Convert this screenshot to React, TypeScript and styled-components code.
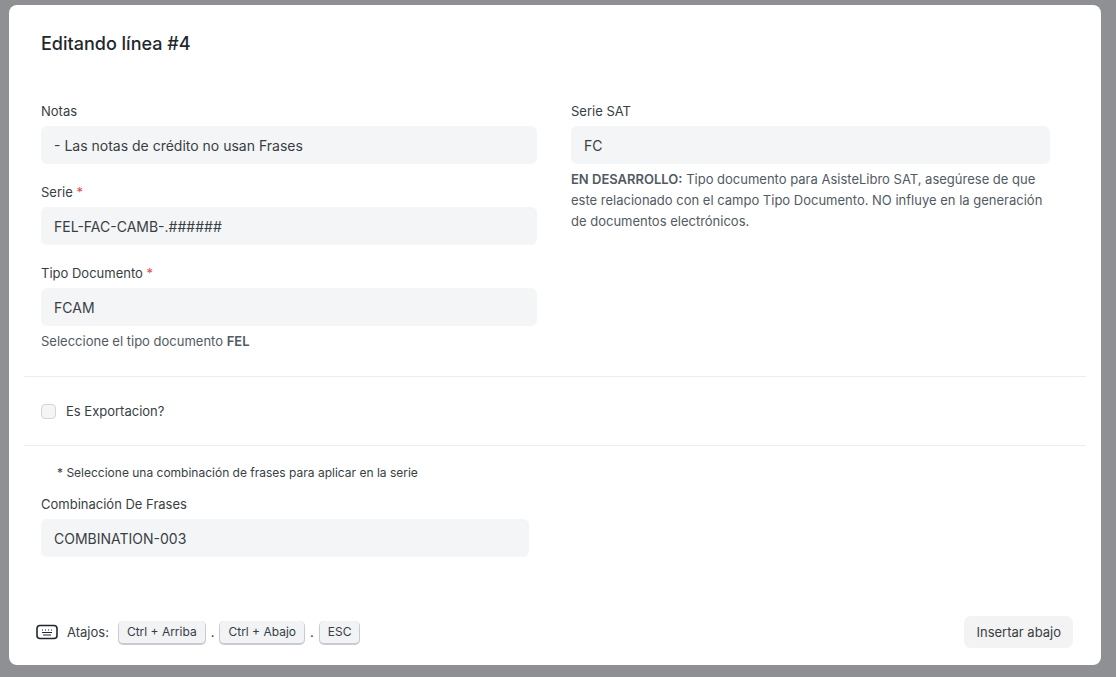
import React from 'react';
import styled, { createGlobalStyle } from 'styled-components';

const Global = createGlobalStyle`
  html, body { margin: 0; height: 100%; background: #8e9094; }
  body { font-family: Inter, "Noto Sans", sans-serif; color: #1f272e; }
`;

const Backdrop = styled.div`
  height: 677px;
  padding: 5px 15px 12px 9px;
  box-sizing: border-box;
`;

const Modal = styled.div`
  width: 1092px;
  height: 660px;
  background: #fff;
  border-radius: 8px;
  display: flex;
  flex-direction: column;
  box-sizing: border-box;
`;

const Title = styled.h3`
  margin: 0;
  padding: 28px 32px 0;
  font-size: 18px;
  font-weight: 500;
  line-height: 22px;
`;

const Section = styled.div<{ $border?: boolean; $pad?: string }>`
  margin: 0 15px;
  padding: ${p => p.$pad || '0'};
  border-bottom: ${p => (p.$border ? '1px solid #ebeef0' : 'none')};
  display: grid;
  grid-template-columns: 530px 530px;
`;

const Col = styled.div<{ $right?: number }>`
  padding: 0 ${p => p.$right ?? 17}px 0 17px;
  display: flex;
  flex-direction: column;
`;

const Label = styled.div`
  font-size: 13px;
  color: #383e44;
  line-height: 16px;
  margin-bottom: 7px;
`;

const Req = styled.span`
  color: #e24c4c;
`;

const Field = styled.div`
  height: 38px;
  background: #f4f5f6;
  border-radius: 6px;
  padding: 0 13px;
  display: flex;
  align-items: center;
  font-size: 14px;
  color: #383e44;
  margin-bottom: 20px;
`;

const Help = styled.div`
  font-size: 13px;
  color: #525a63;
  line-height: 21px;
  margin-top: -15px;
  b { font-weight: 600; }
`;

const CheckRow = styled.label`
  display: flex;
  align-items: center;
  gap: 10px;
  font-size: 13px;
  color: #383e44;
`;

const Box = styled.span`
  width: 13px;
  height: 13px;
  border: 1px solid #d1d5d9;
  border-radius: 4px;
  background: #f4f5f6;
`;

const Note = styled.div`
  font-size: 12px;
  color: #383e44;
  margin: 0 0 16px 16px;
`;

const Footer = styled.div`
  margin-top: auto;
  padding: 0 28px 17px 27px;
  display: flex;
  align-items: center;
  justify-content: space-between;
`;

const Shortcuts = styled.div`
  display: flex;
  align-items: center;
  gap: 6px;
  font-size: 13px;
  color: #383e44;
`;

const Kbd = styled.span`
  font-size: 12px;
  background: #f1f3f5;
  border-radius: 4px;
  box-shadow: 0 1px 0 1px #c8ccd0;
  padding: 3px 8px 4px;
  color: #383e44;
`;

const Btn = styled.button`
  height: 32px;
  padding: 0 11px;
  border: none;
  border-radius: 7px;
  background: #f3f3f3;
  font-family: inherit;
  font-size: 13px;
  color: #383e44;
`;

const KeyIcon = () => (
  <svg width="22" height="16" viewBox="0 0 22 16" fill="none" stroke="#1f272e">
    <rect x="1" y="1.5" width="20" height="13" rx="3" strokeWidth="1.6" />
    <path d="M6 6h1M9 6h1M12 6h1M15 6h1M6 8.5h10M7 11h8" strokeWidth="1" />
  </svg>
);

export default function App() {
  return (
    <>
      <Global />
      <Backdrop>
        <Modal>
          <Title>Editando línea #4</Title>
          <Section $border $pad="48px 0 24px">
            <Col>
              <Label>Notas</Label>
              <Field>- Las notas de crédito no usan Frases</Field>
              <Label>Serie <Req>*</Req></Label>
              <Field>FEL-FAC-CAMB-.######</Field>
              <Label>Tipo Documento <Req>*</Req></Label>
              <Field>FCAM</Field>
              <Help>Seleccione el tipo documento <b>FEL</b></Help>
            </Col>
            <Col $right={34}>
              <Label>Serie SAT</Label>
              <Field>FC</Field>
              <Help>
                <b>EN DESARROLLO:</b> Tipo documento para AsisteLibro SAT, asegúrese de que este relacionado con el campo Tipo Documento. NO influye en la generación de documentos electrónicos.
              </Help>
            </Col>
          </Section>
          <Section $border $pad="26px 0 26px">
            <Col>
              <CheckRow><Box />Es Exportacion?</CheckRow>
            </Col>
          </Section>
          <Section $pad="19px 0 0">
            <Col $right={25}>
              <Note>* Seleccione una combinación de frases para aplicar en la serie</Note>
              <Label>Combinación De Frases</Label>
              <Field>COMBINATION-003</Field>
            </Col>
          </Section>
          <Footer>
            <Shortcuts>
              <KeyIcon />
              <span style={{ margin: '0 4px 0 3px' }}>Atajos:</span>
              <Kbd>Ctrl + Arriba</Kbd>.<Kbd>Ctrl + Abajo</Kbd>.<Kbd>ESC</Kbd>
            </Shortcuts>
            <Btn style={{ padding: '0 12px' }}>Insertar abajo</Btn>
          </Footer>
        </Modal>
      </Backdrop>
    </>
  );
}
